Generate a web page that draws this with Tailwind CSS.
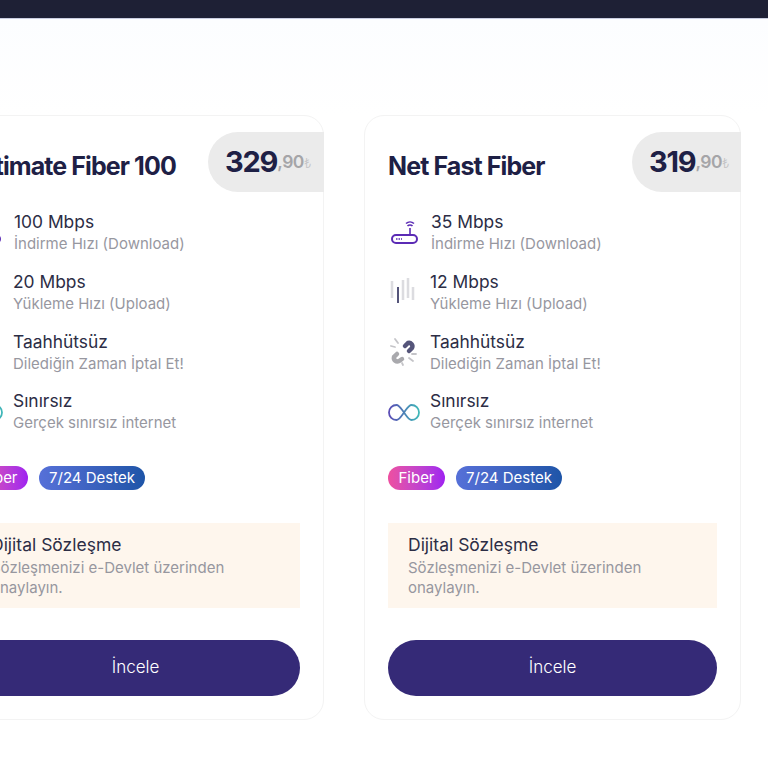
<!DOCTYPE html>
<html lang="tr"><head><meta charset="utf-8"><script src="https://cdn.jsdelivr.net/npm/@tailwindcss/browser@4"></script></head>
<body class="bg-white">
<div class="w-[768px] h-[768px] overflow-hidden bg-white font-['Inter','Liberation_Sans',sans-serif]">
<div class="h-[19px] bg-[#1e2035] border-b border-[#c9cde0]"></div>
<div class="h-[96px] bg-gradient-to-b from-[#fcfdff] to-white"></div>
<div class="flex gap-[40px] ml-[-53px]">

<div class="w-[377px] h-[605px] shrink-0 rounded-[20px] border border-[#f3f3f3] bg-white relative flex flex-col pl-[23px] pr-[23px]">
<div class="absolute right-[-1px] top-[16px] w-[116px] h-[60px] rounded-l-[30px] bg-[#ebebeb] flex items-center pl-[17px]">
<span class="text-[29px] font-bold tracking-[-1.2px] text-[#1e2045]">329</span><span class="text-[17.5px] font-semibold text-[#a5a5a8] tracking-[-0.5px] mt-[1px]">,90</span><span class="text-[13px] font-light text-[#c4c4c6] mt-[3px]">₺</span>
</div>
<h2 class="mt-[34px] h-[33px] leading-[33px] text-[25px] font-bold tracking-[-0.9px] text-[#1e2045] whitespace-nowrap">Ultimate Fiber 100</h2>
<div class="mt-[28px] flex flex-col gap-[16px]">
<div class="flex gap-[10px] h-[44px] items-center"><svg class="w-[32px] h-[32px] shrink-0" viewBox="0 0 32 32" fill="none" stroke="#5b2bb5" stroke-width="2"><rect x="4" y="18" width="25" height="8" rx="4"/><path d="M22 18V11M19.500 9a3.500 3.500 0 0 1 5 0M18 6.500a6 6 0 0 1 8 0" stroke-width="1.600"/><path d="M8 22h6" stroke-dasharray="1.500 1" stroke-width="1.600"/></svg><div class="ml-[1px]"><p class="text-[17.4px] leading-[22px] text-[#2c2d45]">100 Mbps</p><p class="text-[15px] leading-[22px] text-[#97979f]">İndirme Hızı (Download)</p></div></div>
<div class="flex gap-[10px] h-[44px] items-center"><svg class="w-[32px] h-[32px] shrink-0" viewBox="0 0 32 32" fill="none"><path d="M4 4v17M15 3v20M20 1v20M25 10v13" stroke="#dcdce0" stroke-width="2.500"/><path d="M10 10v16" stroke="#55557a" stroke-width="2"/></svg><div><p class="text-[17.4px] leading-[22px] text-[#2c2d45]">20 Mbps</p><p class="text-[15px] leading-[22px] text-[#97979f]">Yükleme Hızı (Upload)</p></div></div>
<div class="flex gap-[10px] h-[44px] items-center"><svg class="w-[32px] h-[32px] shrink-0" viewBox="0 0 32 32" fill="none" stroke-linecap="round"><path d="M17 9l3-3a3.500 3.500 0 0 1 4 5l-3 3" stroke="#55557a" stroke-width="4.500"/><path d="M14 22l-3 2a3.500 3.500 0 0 1-5-4l3-3" stroke="#a9a9ad" stroke-width="4.500"/><path d="M7 2l3 4M3 9l4 1M14 26l1 2M21 21l4 3M24 17h4" stroke="#c4c4c8" stroke-width="1.800"/></svg><div><p class="text-[17.4px] leading-[22px] text-[#2c2d45]">Taahhütsüz</p><p class="text-[15px] leading-[22px] text-[#97979f]">Dilediğin Zaman İptal Et!</p></div></div>
<div class="flex gap-[10px] h-[44px] items-center -mt-[1px]"><svg class="w-[32px] h-[32px] shrink-0" viewBox="0 0 32 32" fill="none"><defs><linearGradient id="a" x1="0" x2="1" y1="0" y2="0"><stop offset="0" stop-color="#5a4bb5"/><stop offset="1" stop-color="#3fb8b8"/></linearGradient></defs><path d="M16 16.500C12 11 11 9 8.500 9a7.500 7.500 0 0 0 0 15C11 24 12 22 16 16.500S21 9 23.500 9a7.500 7.500 0 0 1 0 15C21 24 20 22 16 16.500z" stroke="url(#a)" stroke-width="1.800"/></svg><div><p class="text-[17.4px] leading-[22px] text-[#2c2d45]">Sınırsız</p><p class="text-[15px] leading-[22px] text-[#97979f]">Gerçek sınırsız internet</p></div></div>
</div>
<div class="mt-[32px] flex gap-[11px] h-[24px] text-[15px] text-white">
<span class="w-[57px] rounded-full bg-gradient-to-r from-[#ee4fa0] to-[#a020f0] flex items-center justify-center">Fiber</span>
<span class="w-[106px] rounded-full bg-gradient-to-r from-[#5670d8] to-[#1e55a8] flex items-center justify-center">7/24 Destek</span>
</div>
<div class="mt-[33px] h-[85px] bg-[#fef6ed] pl-[20px] pt-[11px]"><p class="text-[17.500px] leading-[22px] text-[#2c2d45]">Dijital Sözleşme</p><p class="text-[15px] leading-[20px] text-[#97979f] w-[260px] pt-[1.5px]">Sözleşmenizi e-Devlet üzerinden onaylayın.</p></div>
<button class="mt-[32px] h-[56px] rounded-full bg-[#352a77] text-white text-[17px] font-light">İncele</button>
</div>

<div class="w-[377px] h-[605px] shrink-0 rounded-[20px] border border-[#f3f3f3] bg-white relative flex flex-col pl-[23px] pr-[23px]">
<div class="absolute right-[-1px] top-[16px] w-[109px] h-[60px] rounded-l-[30px] bg-[#ebebeb] flex items-center pl-[17px]">
<span class="text-[29px] font-bold tracking-[-1.2px] text-[#1e2045]">319</span><span class="text-[17.5px] font-semibold text-[#a5a5a8] tracking-[-0.5px] mt-[1px]">,90</span><span class="text-[13px] font-light text-[#c4c4c6] mt-[3px]">₺</span>
</div>
<h2 class="mt-[34px] h-[33px] leading-[33px] text-[25px] font-bold tracking-[-0.9px] text-[#1e2045] whitespace-nowrap">Net Fast Fiber</h2>
<div class="mt-[28px] flex flex-col gap-[16px]">
<div class="flex gap-[10px] h-[44px] items-center"><svg class="w-[32px] h-[32px] shrink-0" viewBox="0 0 32 32" fill="none" stroke="#5b2bb5" stroke-width="2"><rect x="4" y="18" width="25" height="8" rx="4"/><path d="M22 18V11M19.500 9a3.500 3.500 0 0 1 5 0M18 6.500a6 6 0 0 1 8 0" stroke-width="1.600"/><path d="M8 22h6" stroke-dasharray="1.500 1" stroke-width="1.600"/></svg><div class="ml-[1px]"><p class="text-[17.4px] leading-[22px] text-[#2c2d45]">35 Mbps</p><p class="text-[15px] leading-[22px] text-[#97979f]">İndirme Hızı (Download)</p></div></div>
<div class="flex gap-[10px] h-[44px] items-center"><svg class="w-[32px] h-[32px] shrink-0" viewBox="0 0 32 32" fill="none"><path d="M4 4v17M15 3v20M20 1v20M25 10v13" stroke="#dcdce0" stroke-width="2.500"/><path d="M10 10v16" stroke="#55557a" stroke-width="2"/></svg><div><p class="text-[17.4px] leading-[22px] text-[#2c2d45]">12 Mbps</p><p class="text-[15px] leading-[22px] text-[#97979f]">Yükleme Hızı (Upload)</p></div></div>
<div class="flex gap-[10px] h-[44px] items-center"><svg class="w-[32px] h-[32px] shrink-0" viewBox="0 0 32 32" fill="none" stroke-linecap="round"><path d="M17 9l3-3a3.500 3.500 0 0 1 4 5l-3 3" stroke="#55557a" stroke-width="4.500"/><path d="M14 22l-3 2a3.500 3.500 0 0 1-5-4l3-3" stroke="#a9a9ad" stroke-width="4.500"/><path d="M7 2l3 4M3 9l4 1M14 26l1 2M21 21l4 3M24 17h4" stroke="#c4c4c8" stroke-width="1.800"/></svg><div><p class="text-[17.4px] leading-[22px] text-[#2c2d45]">Taahhütsüz</p><p class="text-[15px] leading-[22px] text-[#97979f]">Dilediğin Zaman İptal Et!</p></div></div>
<div class="flex gap-[10px] h-[44px] items-center -mt-[1px]"><svg class="w-[32px] h-[32px] shrink-0" viewBox="0 0 32 32" fill="none"><defs><linearGradient id="b" x1="0" x2="1" y1="0" y2="0"><stop offset="0" stop-color="#5a4bb5"/><stop offset="1" stop-color="#3fb8b8"/></linearGradient></defs><path d="M16 16.500C12 11 11 9 8.500 9a7.500 7.500 0 0 0 0 15C11 24 12 22 16 16.500S21 9 23.500 9a7.500 7.500 0 0 1 0 15C21 24 20 22 16 16.500z" stroke="url(#b)" stroke-width="1.800"/></svg><div><p class="text-[17.4px] leading-[22px] text-[#2c2d45]">Sınırsız</p><p class="text-[15px] leading-[22px] text-[#97979f]">Gerçek sınırsız internet</p></div></div>
</div>
<div class="mt-[32px] flex gap-[11px] h-[24px] text-[15px] text-white">
<span class="w-[57px] rounded-full bg-gradient-to-r from-[#ee4fa0] to-[#a020f0] flex items-center justify-center">Fiber</span>
<span class="w-[106px] rounded-full bg-gradient-to-r from-[#5670d8] to-[#1e55a8] flex items-center justify-center">7/24 Destek</span>
</div>
<div class="mt-[33px] h-[85px] bg-[#fef6ed] pl-[20px] pt-[11px]"><p class="text-[17.500px] leading-[22px] text-[#2c2d45]">Dijital Sözleşme</p><p class="text-[15px] leading-[20px] text-[#97979f] w-[260px] pt-[1.5px]">Sözleşmenizi e-Devlet üzerinden onaylayın.</p></div>
<button class="mt-[32px] h-[56px] rounded-full bg-[#352a77] text-white text-[17px] font-light">İncele</button>
</div>
</div>
</div>
</body></html>
